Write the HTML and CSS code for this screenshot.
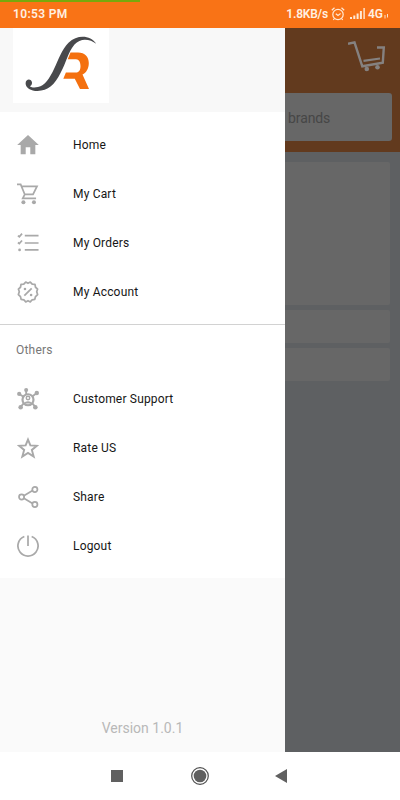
FILE: index.html
```html
<!DOCTYPE html>
<html lang="en">
<head>
<meta charset="utf-8">
<title>Menu</title>
<link rel="stylesheet" href="styles.css">
</head>
<body>
<div class="screen">
  <header class="status">
    <div class="progress"></div>
    <span class="time">10:53 PM</span>
    <span class="net">1.8KB/s</span>
    <svg class="alarm" width="14" height="14" viewBox="0 0 14 14" fill="none" stroke="#ffe9d6" stroke-width="1.200"><circle cx="7" cy="7.5" r="5.200"/><path d="M.8 3.2 3.5.8M13.200 3.2 10.5.8M4.8 6.8 7 8.5 9.6 6.6M3.5 11.5 2.3 13M10.5 11.5 11.7 13"/></svg>
    <svg class="signal" width="16" height="12" viewBox="0 0 16 12" fill="#ffe9d6"><path d="M0 9h2v2H0zM3.3 7.5h2V11h-2zM6.6 5.5h2V11h-2zM9.9 3h2v8h-2zM13.4 0h1.4v11h-1.4z"/></svg>
    <span class="lte">4G</span>
    <svg class="arrows" width="5" height="5" viewBox="0 0 5 5" stroke="#ffe0c4" stroke-width="1"><path d="M1 1v3.5M3.5 0v3.5"/></svg>
  </header>
  <main class="main">
    <nav class="drawer">
      <div class="brand">
        <svg class="logo" width="96" height="75" viewBox="0 0 96 75">
          <path fill="#f4700f" d="M57.500 24.500H65c7 0 10.800 4.500 10.800 10.500 0 5.500-2.300 9.500-6.300 11.500L76 61H67L61.800 50.800H50.300l2.600-6.300H63c3 0 4.500-2.500 4.500-6.300 0-4-1.500-7-4.500-7H54.700z"/>
          <path fill="#48494c" d="M83.300 15.800C77 10.800 67.500 9.500 61.500 16.500 54.500 25 53.500 34.500 47.500 45 42 56.500 35 62.700 24.500 63 18 63 12.600 60 12.600 55.200 12.800 50.300 18.500 50.300 19 54.500 19.200 56.500 18 57.800 16.800 58.200 18.500 59.500 21.500 59.800 25 59 32 57.500 36.500 50.500 41 41 46 30.500 48.500 22 55.500 14.700 64.500 6 77.500 7 83.300 15.800z"/>
        </svg>
      </div>
      <div class="menu">
        <a class="item"><svg class="icon" viewBox="0 0 24 24" fill="#a9a9a9"><path d="M9.500 22v-7.500h5V22H20v-10h3.800L12 1 .2 12H4v10z"/></svg>Home</a>
        <a class="item"><svg class="icon" viewBox="0 0 24 24" fill="none" stroke="#a9a9a9" stroke-width="1.900"><path d="M0 1.500h4L8.500 12.500h9L21.800 3.800H5M8.500 12.500 6.300 16.700h14.500"/><circle cx="7" cy="21" r="2.200" fill="#a9a9a9" stroke="none"/><circle cx="18.500" cy="21" r="2.200" fill="#a9a9a9" stroke="none"/></svg>My Cart</a>
        <a class="item"><svg class="icon" viewBox="0 0 24 24" fill="none" stroke="#a9a9a9" stroke-width="1.900"><path d="M8.500 4h15M8.500 12h15M8.500 19.500h15M1 4 2.500 5.200 5.500 1.800M1 11.500 2.500 12.700 5.500 9.300"/><circle cx="2.800" cy="19.500" r="1.500" fill="#a9a9a9" stroke="none"/></svg>My Orders</a>
        <a class="item"><svg class="icon" viewBox="0 0 24 24" fill="none" stroke="#a9a9a9" stroke-width="1.900" stroke-linejoin="round"><path d="M12 2.500 14.500 1.200 16.600 3.400 19.600 3.700 20.200 6.800 22.500 8.800 21.500 11.700 22.500 14.800 20.200 17 19.400 20 16.500 20.500 14.500 22.800 12 21.500 9.500 22.800 7.500 20.500 4.500 20 3.800 17 1.500 14.800 2.500 11.700 1.500 8.800 3.800 6.800 4.400 3.700 7.400 3.400 9.500 1.200z"/><path d="M16 8 8 16"/><circle cx="8.700" cy="8.800" r="1.400" fill="#a9a9a9" stroke="none"/><circle cx="15.400" cy="15.300" r="1.400" fill="#a9a9a9" stroke="none"/></svg>My Account</a>
      </div>
      <h2 class="group">Others</h2>
      <div class="menu others">
        <a class="item"><svg class="icon" viewBox="0 0 24 24" fill="#a9a9a9" stroke="#a9a9a9"><path fill="none" stroke-width="2" d="M10 1.800V7M2.500 6.500 7 9.500M21.500 5.500 17 9M4 20.500 7.500 16.500M20 20.500 16.500 16.500"/><circle cx="12" cy="12.800" r="6" fill="none" stroke-width="2.400"/><circle cx="12" cy="11" r="1.900" fill="none" stroke-width="1.600"/><path d="M8 17c.5-3.500 7.500-3.500 8 0z" stroke="none"/><g stroke="none"><circle cx="10" cy="2.300" r="2.200"/><circle cx="2.400" cy="6.500" r="2.300"/><circle cx="21.600" cy="5.500" r="2.400"/><circle cx="4" cy="21" r="2.500"/><circle cx="20" cy="21" r="2.500"/></g></svg>Customer Support</a>
        <a class="item"><svg class="icon" viewBox="0 0 24 24" fill="none" stroke="#a9a9a9" stroke-width="2.100"><path d="M12 2.800 14.600 9.200 21.700 9.600 16.200 14.100 18.200 21.400 12 17.400 5.800 21.400 7.800 14.100 2.300 9.600 9.400 9.200z"/></svg>Rate US</a>
        <a class="item"><svg class="icon" viewBox="0 0 24 24" fill="none" stroke="#a9a9a9" stroke-width="1.900"><path d="M7.500 10.600 17 5M7.500 13.400 17 19"/><circle cx="5" cy="12" r="2.800"/><circle cx="19.500" cy="3.800" r="2.800"/><circle cx="19.500" cy="20.200" r="2.800"/></svg>Share</a>
        <a class="item"><svg class="icon" viewBox="0 0 24 24" fill="none" stroke="#a9a9a9" stroke-width="1.900"><path d="M8 1.700a11 11 0 1 0 8 0M12 .5V12"/></svg>Logout</a>
      </div>
      <div class="version">Version 1.0.1</div>
    </nav>
    <section class="page">
      <div class="top">
        <svg class="cart" width="40" height="34" viewBox="0 0 40 34" fill="none" stroke="#858180" stroke-width="2.400"><path d="M0 5.800 6.500 4.300 14.300 28.300 34.800 24.800 35.800 9.500H29"/><path d="M15.500 22.800 32 20.500" stroke-width="2.200"/><circle cx="18.800" cy="31" r="2.300" fill="#858180" stroke="none"/><circle cx="29.500" cy="29.300" r="2.300" fill="#858180" stroke="none"/></svg>
        <div class="search">brands</div>
      </div>
      <div class="cards">
        <div class="card banner"></div>
        <div class="card"></div>
        <div class="card"></div>
      </div>
    </section>
  </main>
  <footer class="keys">
    <svg width="12" height="12"><path fill="#606060" d="M0 0h12v12H0z"/></svg>
    <svg width="20" height="20" viewBox="0 0 20 20"><circle cx="10" cy="10" r="8.300" fill="none" stroke="#505050" stroke-width="1.200"/><circle cx="10" cy="10" r="6.300" fill="#606060"/></svg>
    <svg width="12" height="14"><path fill="#606060" d="M12 0v14L0 7z"/></svg>
  </footer>
</div>
</body>
</html>
```
FILE: styles.css
```css
* { box-sizing: border-box; }
body { margin: 0; font-family: Roboto, sans-serif; }
svg { display: block; flex: none; }
.screen { display: flex; flex-direction: column; width: 400px; height: 800px; overflow: hidden; background: #fff; }
.status { position: relative; display: flex; align-items: center; height: 28px; padding: 0 11px 0 13px; background: #f97316; color: #fff0e2; font-size: 12px; font-weight: 600; }
.progress { position: absolute; top: 0; left: 0; width: 140px; height: 2px; background: #79a80c; }
.time { letter-spacing: 0.35px; }
.net { margin-left: auto; letter-spacing: -0.2px; }
.alarm { margin-left: 3px; }
.signal { margin-left: 5px; }
.lte { margin-left: 2px; }
.arrows { margin: 5px 0 0 1px; }
.main { display: flex; height: 724px; }
.drawer { display: flex; flex-direction: column; width: 285px; background: #fafafa; }
.brand { height: 84px; padding-left: 13px; background: #f8f8f8; }
.logo { background: #fff; }
.menu { height: 212px; padding-top: 9px; background: #fff; }
.item { display: flex; align-items: center; gap: 34px; height: 48.850px; padding-left: 17px; color: #161616; font-size: 12px; letter-spacing: 0.18px; }
.icon { width: 22px; height: 22px; }
.group { height: 51px; margin: 0; padding-left: 16px; border-top: 1px solid #d2d2d2; background: #fff; color: #777; font-size: 12px; font-weight: 400; line-height: 51px; letter-spacing: 0.2px; }
.others { height: 203px; padding-top: 0; }
.version { margin-top: auto; height: 48px; line-height: 48px; text-align: center; color: #b8b8b8; font-size: 14px; letter-spacing: 0; }
.page { width: 115px; background: #5e6062; }
.top { height: 124px; padding-top: 10px; background: #623a1e; }
.cart { margin-left: 63px; }
.search { width: 107px; height: 48px; margin-top: 21px; padding-left: 3px; border-radius: 0 3px 3px 0; background: #676767; color: #464646; font-size: 14px; line-height: 50px; letter-spacing: -0.1px; }
.cards { display: flex; flex-direction: column; gap: 5px; padding-top: 10px; }
.card { width: 105px; height: 33px; border-radius: 0 2px 2px 0; background: #676767; }
.banner { height: 143px; }
.keys { display: flex; align-items: center; height: 48px; padding-left: 111px; gap: 67px; background: #fff; }
.keys svg:last-child { margin-left: -2px; }
```
